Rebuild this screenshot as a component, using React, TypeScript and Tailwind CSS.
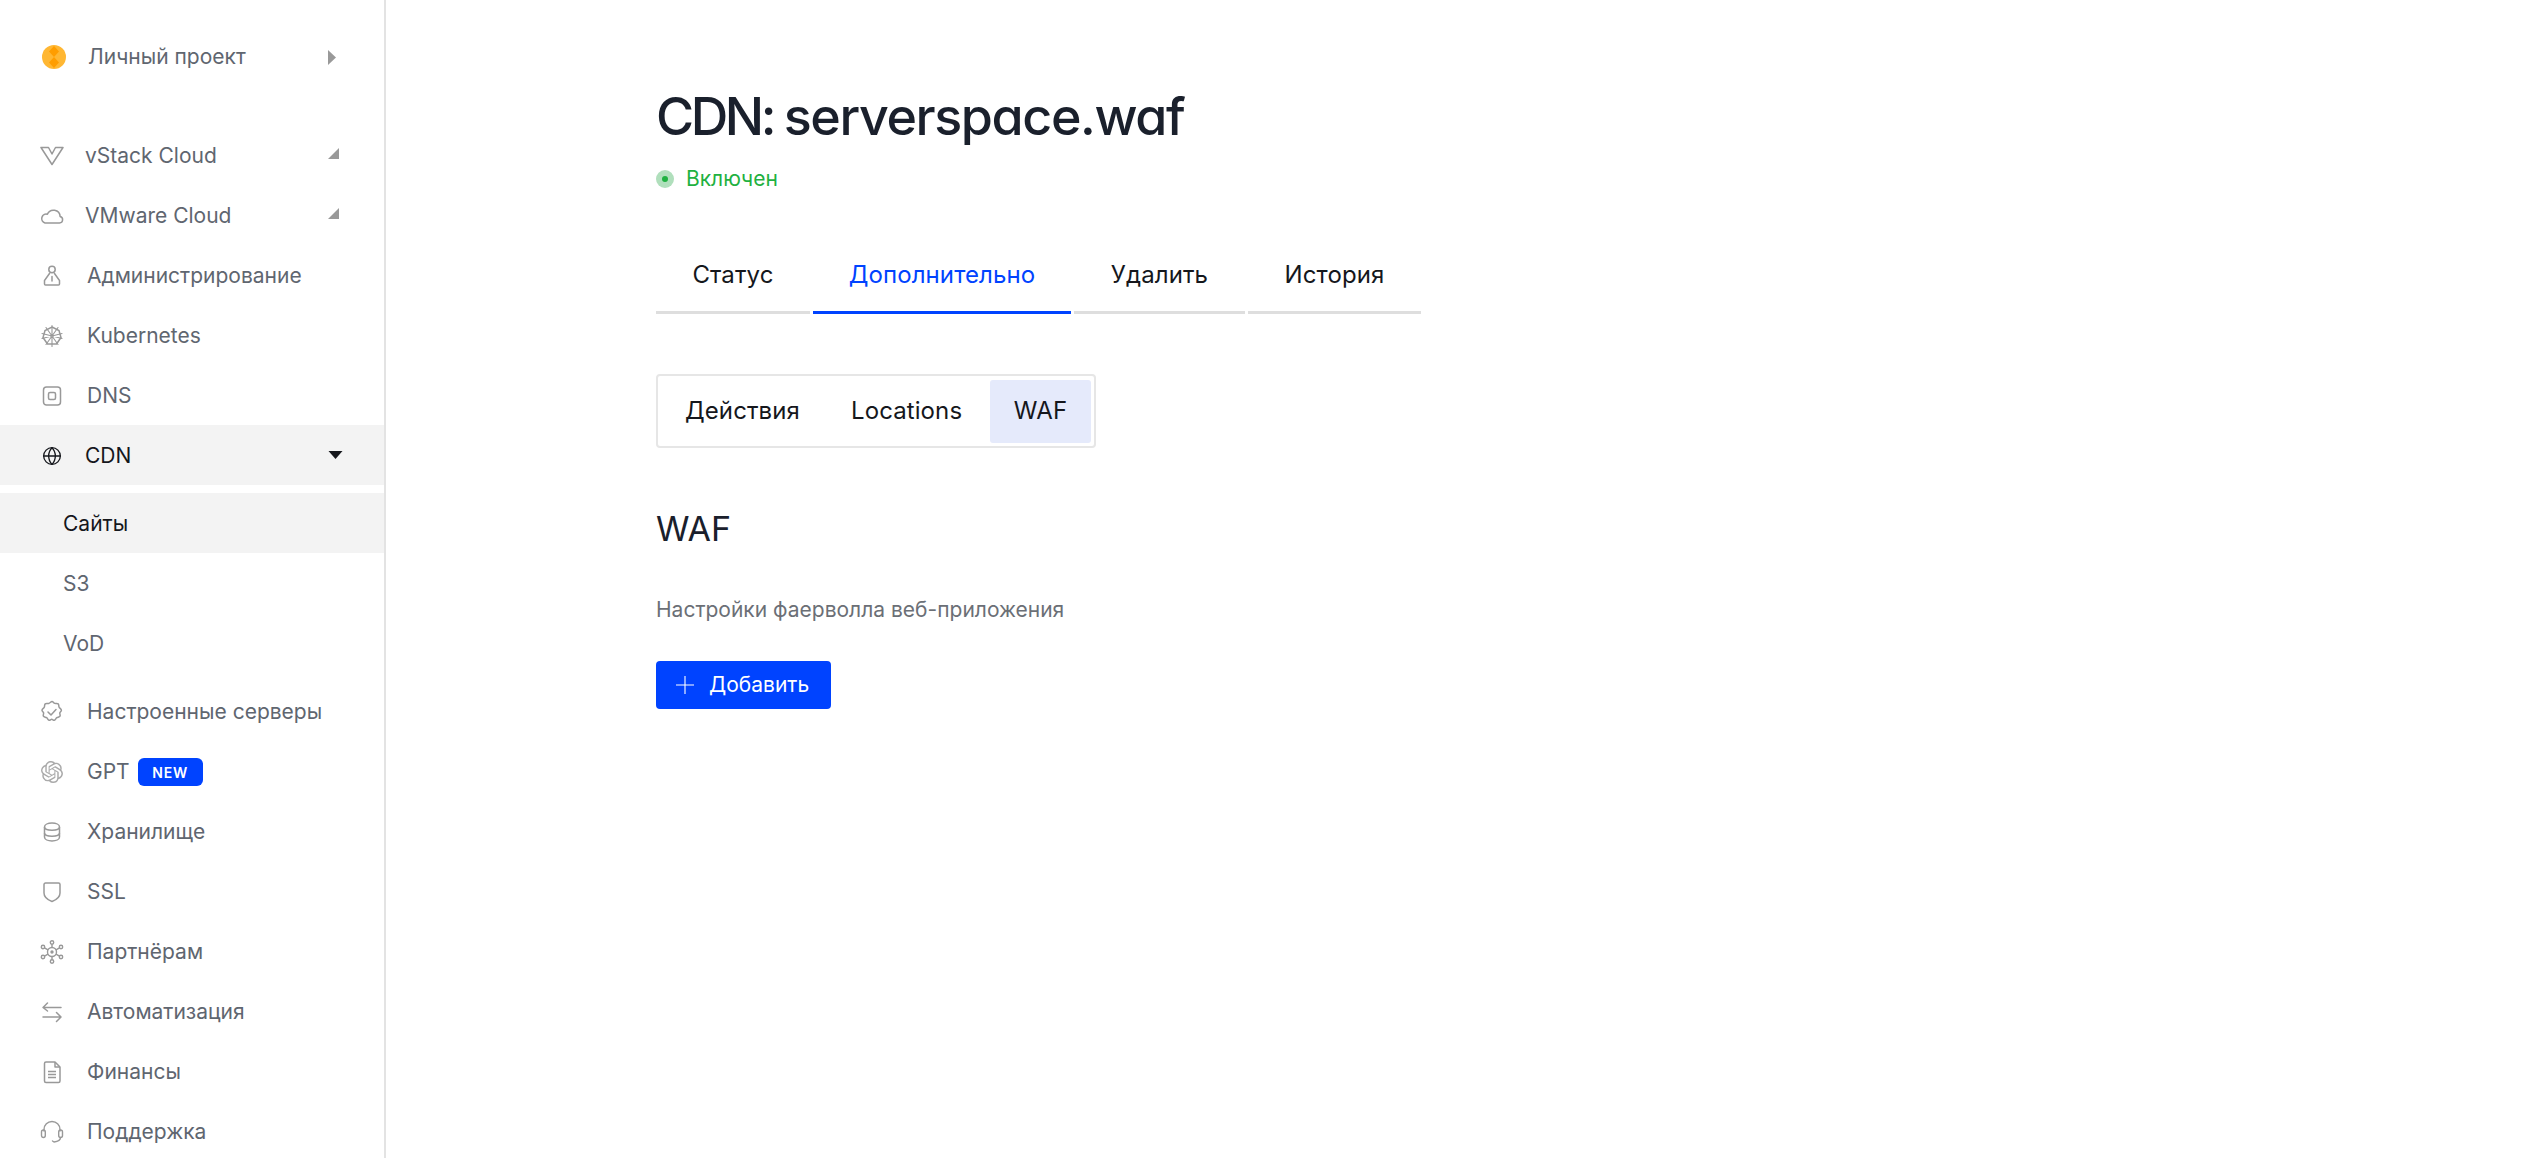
import { ReactNode } from "react";
import { Globe } from "lucide-react";
import { SiOpenai } from "react-icons/si";

function VStackIcon() {
  return (
    <svg viewBox="0 0 24 24" className="h-6 w-6" fill="none" stroke="#999" strokeWidth="1.5" strokeLinejoin="round">
      <path d="M1 3.500h7.500L12 10l3.500-6.500H23L12 20.500z" />
    </svg>
  );
}

function CloudIcon() {
  return (
    <svg viewBox="0 0 24 24" className="h-6 w-6" fill="none" stroke="#999" strokeWidth="1.5" strokeLinejoin="round">
      <path d="M5 19h14.500a3.300 3.300 0 0 0 .6-6.500 6.600 6.600 0 0 0-12.700-2.200A4.400 4.400 0 0 0 5 19z" />
    </svg>
  );
}

function AdminIcon() {
  return (
    <svg viewBox="0 0 24 24" className="h-6 w-6" fill="none" stroke="#999" strokeWidth="1.5" strokeLinecap="round">
      <circle cx="12" cy="5.500" r="3.200" />
      <path d="M9.500 9.500 4.500 16.500V20a1 1 0 0 0 1 1h13a1 1 0 0 0 1-1v-3.500L14.500 9.500M12 12.500v4.500" />
    </svg>
  );
}

function KubernetesIcon() {
  return (
    <svg viewBox="0 0 24 24" className="h-6 w-6" fill="none" stroke="#999" strokeWidth="1.5" strokeLinecap="round">
      <path d="M12 1.500v21M2 9.500l20 5M22 9.500l-20 5M6 3.500l12 17M18 3.500 6 20.500" strokeWidth="1.100" />
      <path d="M12 3 19 6.500 21 13.500 16.500 20H7.500L3 13.500 5 6.500z" />
    </svg>
  );
}

function DnsIcon() {
  return (
    <svg viewBox="0 0 24 24" className="h-6 w-6" fill="none" stroke="#999" strokeWidth="1.5">
      <rect x="3.500" y="3" width="17" height="18" rx="3" />
      <rect x="8.500" y="8.500" width="7" height="7" rx="1.500" />
    </svg>
  );
}

function ManagedIcon() {
  return (
    <svg viewBox="0 0 24 24" className="h-6 w-6" fill="none" stroke="#999" strokeWidth="1.5" strokeLinejoin="round" strokeLinecap="round">
      <path d="M12 1.500c1.200 0 1.600 1.500 2.700 1.900 1.200.4 2.600-.3 3.500.5.900.800.4 2.300.9 3.400.5 1.100 2.300 1.500 2.300 2.900 0 1.300-1.400 1.600-1.600 2.700-.2 1.100.8 2.300.2 3.300-.6 1.100-2.200.800-3.200 1.500-1 .7-1.300 2.400-2.500 2.600-1 .2-1.600-1-2.600-1s-1.600 1.200-2.600 1c-1.200-.2-1.500-1.900-2.500-2.600-1-.7-2.600-.4-3.200-1.500-.6-1 .4-2.200.2-3.300-.2-1.100-1.600-1.400-1.600-2.700 0-1.400 1.800-1.800 2.300-2.900.5-1.100 0-2.600.9-3.400.9-.8 2.300-.1 3.500-.5C10.400 3 10.800 1.500 12 1.500z" />
      <path d="M8 12l3 3 5-5.500" />
    </svg>
  );
}

function StorageIcon() {
  return (
    <svg viewBox="0 0 24 24" className="h-6 w-6" fill="none" stroke="#999" strokeWidth="1.5">
      <path d="M4.500 7c0-2.500 3.500-4 7.500-4s7.500 1.500 7.500 4v10c0 2.500-3.500 4-7.500 4s-7.500-1.500-7.500-4z" />
      <path d="M4.500 7c0 2 3.500 3.200 7.500 3.200S19.500 9 19.500 7M4.500 13c0 2 3.500 3.200 7.500 3.200s7.500-1.200 7.500-3.200" />
    </svg>
  );
}

function ShieldIcon() {
  return (
    <svg viewBox="0 0 24 24" className="h-6 w-6" fill="none" stroke="#999" strokeWidth="1.5" strokeLinejoin="round">
      <path d="M5.500 3h13a1.500 1.500 0 0 1 1.500 1.500V13c0 4-3.500 6.800-8 8.500-4.500-1.700-8-4.500-8-8.500V4.500A1.500 1.500 0 0 1 5.500 3z" />
    </svg>
  );
}

function PartnersIcon() {
  return (
    <svg viewBox="0 0 24 24" className="h-6 w-6" fill="none" stroke="#999" strokeWidth="1.400">
      <circle cx="12" cy="12" r="4.500" />
      <circle cx="12" cy="12" r="1" fill="#999" />
      <circle cx="12" cy="2.500" r="1.700" />
      <circle cx="12" cy="21.500" r="1.700" />
      <circle cx="3" cy="7" r="1.700" />
      <circle cx="21" cy="7" r="1.700" />
      <circle cx="3" cy="17" r="1.700" />
      <circle cx="21" cy="17" r="1.700" />
      <path d="M12 4.200v3.300M12 16.500v3.300M4.500 7.800l3.500 2M19.500 7.800l-3.500 2M4.500 16.200l3.500-2M19.500 16.200l-3.500-2" />
    </svg>
  );
}

function AutomationIcon() {
  return (
    <svg viewBox="0 0 24 24" className="h-6 w-6" fill="none" stroke="#999" strokeWidth="1.500" strokeLinecap="round" strokeLinejoin="round">
      <path d="M21 7.500H3.500M7.500 3 3 7.500 7.500 11" />
      <path d="M3 17h17.500M16.500 12.500 21 17l-4.500 4.500" />
    </svg>
  );
}

function FinanceIcon() {
  return (
    <svg viewBox="0 0 24 24" className="h-6 w-6" fill="none" stroke="#999" strokeWidth="1.500" strokeLinejoin="round">
      <path d="M6 2h9l5 5v14a1.500 1.500 0 0 1-1.500 1.500h-12.500A1.500 1.500 0 0 1 4.500 21V3.500A1.500 1.500 0 0 1 6 2z" />
      <path d="M15 2v5h5M8 11.500h8M8 14.500h8M8 17.500h8" />
    </svg>
  );
}

function SupportIcon() {
  return (
    <svg viewBox="0 0 24 24" className="h-[26px] w-[26px]" fill="none" stroke="#999" strokeWidth="1.400" strokeLinecap="round">
      <path d="M4 11V9.500a8 8 0 0 1 16 0V11" />
      <rect x="1.500" y="10" width="3.800" height="7.500" rx="1.900" />
      <rect x="18.700" y="10" width="3.800" height="7.500" rx="1.900" />
      <path d="M20.500 17.500c0 2.500-3 4-6.500 4.500M14 22l-1.500-1" />
    </svg>
  );
}

function ProjectLogo() {
  return (
    <svg viewBox="0 0 24 24" className="h-6 w-6">
      <circle cx="12" cy="12" r="12" fill="#ffb733" />
      <path d="M12 1 17 6.500 12 12 7 6.500zM12 12l5 5.500-5 5.500-5-5.500z" fill="#ff9d00" />
    </svg>
  );
}

function SideRow({
  icon,
  children,
  tight,
  active,
  arrow,
}: {
  icon: ReactNode;
  children: ReactNode;
  tight?: boolean;
  active?: boolean;
  arrow?: boolean;
}) {
  return (
    <div className={`relative flex h-[60px] shrink-0 items-center pl-[40px] pt-[2px] ${active ? "bg-[#f3f3f3] text-[#15171c]" : "text-[#5f6670]"}`}>
      <span className={`flex w-6 items-center justify-center ${tight ? "mr-[21px]" : "mr-[23px]"}`}>{icon}</span>
      {children}
      {arrow && (
        <svg viewBox="0 0 10 10" className="absolute left-[328px] top-[23px] h-[11px] w-[11px]">
          <path d="M10 0v10H0z" fill="#999" />
        </svg>
      )}
    </div>
  );
}

function SubRow({ children, active }: { children: ReactNode; active?: boolean }) {
  return (
    <div className={`flex h-[60px] shrink-0 items-center pl-[63px] pt-[2px] ${active ? "bg-[#f3f3f3] text-[#15171c]" : "text-[#5f6670]"}`}>
      {children}
    </div>
  );
}

function Sidebar() {
  return (
    <aside className="flex h-[1158px] w-[386px] shrink-0 flex-col overflow-hidden border-r-2 border-[#e3e3e3] text-[21px]">
      <div className="mt-[26px] flex h-[60px] shrink-0 items-center pl-[42px] pt-[2px] text-[#5f6670]">
        <ProjectLogo />
        <span className="ml-[22px] w-[240px]">Личный проект</span>
        <svg viewBox="0 0 8 15" className="h-[15px] w-2">
          <path d="M0 0l8 7.500-8 7.500z" fill="#999" />
        </svg>
      </div>

      <div className="mt-[39px] flex flex-col">
        <SideRow tight arrow icon={<VStackIcon />}>vStack Cloud</SideRow>
        <SideRow tight arrow icon={<CloudIcon />}>VMware Cloud</SideRow>
        <SideRow icon={<AdminIcon />}>Администрирование</SideRow>
        <SideRow icon={<KubernetesIcon />}>Kubernetes</SideRow>
        <SideRow icon={<DnsIcon />}>DNS</SideRow>
        <SideRow tight active icon={<Globe size={20} strokeWidth={1.6} color="#15171c" />}>
          CDN
          <svg viewBox="0 0 14 8" className="absolute left-[328px] top-[26px] h-2 w-[15px]">
            <path d="M0 0h14L7 8z" fill="#15171c" />
          </svg>
        </SideRow>
      </div>

      <div className="mt-2 flex flex-col">
        <SubRow active>Сайты</SubRow>
        <SubRow>S3</SubRow>
        <SubRow>VoD</SubRow>
      </div>

      <div className="mt-2 flex flex-col">
        <SideRow icon={<ManagedIcon />}>Настроенные серверы</SideRow>
        <SideRow icon={<SiOpenai size={22} color="#aaa" />}>
          GPT
          <span className="ml-[8px] flex h-7 w-[65px] items-center justify-center rounded-[6px] bg-[#0043ff] text-[14px] font-semibold tracking-[0.8px] text-white">
            NEW
          </span>
        </SideRow>
        <SideRow icon={<StorageIcon />}>Хранилище</SideRow>
        <SideRow icon={<ShieldIcon />}>SSL</SideRow>
        <SideRow icon={<PartnersIcon />}>Партнёрам</SideRow>
        <SideRow icon={<AutomationIcon />}>Автоматизация</SideRow>
        <SideRow icon={<FinanceIcon />}>Финансы</SideRow>
        <SideRow icon={<SupportIcon />}>Поддержка</SideRow>
      </div>
    </aside>
  );
}

const tabs = [
  { label: "Статус", width: "w-[154px]" },
  { label: "Дополнительно", width: "w-[258px]", active: true },
  { label: "Удалить", width: "w-[171px]" },
  { label: "История", width: "w-[173px]" },
];

export default function App() {
  return (
    <div className="flex h-[1158px] overflow-hidden bg-white font-['Inter',sans-serif]">
      <Sidebar />
      <main className="flex-1 pl-[270px]">
        <h1 className="mt-[84px] h-[66px] text-[52px] font-medium leading-[66px] tracking-[-1.4px] text-[#1a202c] [font-feature-settings:'cv11'] [word-spacing:-2px]">
          <span className="tracking-[-3.4px]">CDN:</span> serverspace.waf
        </h1>
        <div className="mt-[17px] flex h-6 items-center gap-[12px] text-[21px] text-[#1fb141]">
          <span className="flex h-[18px] w-[18px] items-center justify-center rounded-full bg-[#b0dfbc]">
            <span className="h-[6px] w-[6px] rounded-full bg-[#1fb141]" />
          </span>
          Включен
        </div>

        <div className="mt-[52px] flex gap-[3px]">
          {tabs.map((tab) => (
            <div
              key={tab.label}
              className={`flex h-[71px] items-center justify-center border-b-[3px] pb-[5px] text-[24px] tracking-[0.1px] ${tab.width} ${
                tab.active ? "border-[#0043ff] text-[#0043ff]" : "border-[#dedede] text-[#15171c]"
              }`}
            >
              {tab.label}
            </div>
          ))}
        </div>

        <div className="mt-[60px] flex h-[74px] w-[440px] items-center rounded-[4px] border-2 border-[#e6e6e6] pr-[3px] text-[24px] tracking-[0.1px] text-[#15171c]">
          <span className="ml-[27px]">Действия</span>
          <span className="ml-[51px]">Locations</span>
          <span className="ml-auto flex h-[63px] w-[101px] items-center justify-center rounded-[3px] bg-[#e5eafb]">WAF</span>
        </div>

        <h2 className="mt-[59px] h-[44px] text-[34px] font-normal leading-[44px] text-[#1a202c]">WAF</h2>
        <p className="mt-[47px] h-6 text-[21px] leading-6 text-[#6b6f76]">Настройки фаерволла веб-приложения</p>
        <button className="mt-[39px] flex h-12 w-[175px] items-center rounded-[4px] bg-[#0043ff] pl-[20px] text-[21px] text-white">
          <svg viewBox="0 0 18 18" className="h-[18px] w-[18px]" fill="none" stroke="#fff" strokeWidth="1.100">
            <path d="M9 0v18M0 9h18" />
          </svg>
          <span className="ml-[15px]">Добавить</span>
        </button>
      </main>
    </div>
  );
}
